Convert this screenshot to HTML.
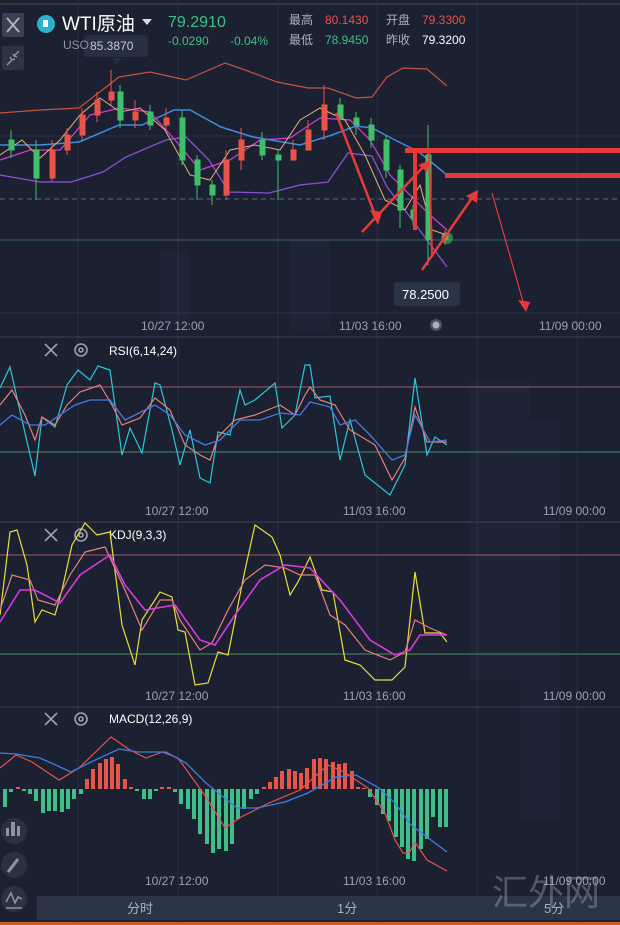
<!DOCTYPE html>
<html><head><meta charset="utf-8"><style>
html,body{margin:0;padding:0;background:#1b2131;width:620px;height:925px;overflow:hidden}
svg{display:block}
text{font-family:"Liberation Sans","Noto Sans CJK SC",sans-serif}
</style></head><body>
<svg width="620" height="925" viewBox="0 0 620 925" xmlns="http://www.w3.org/2000/svg">
<rect width="620" height="925" fill="#1b2131"/>
<line x1="0" y1="4" x2="620" y2="4" stroke="#5a4a3a" stroke-width="1"/>
<g fill="#20273a" opacity="0.6">
<rect x="290" y="240" width="40" height="90"/><rect x="470" y="380" width="60" height="300"/><rect x="520" y="420" width="40" height="400"/><rect x="160" y="250" width="30" height="80"/>
</g>
<g stroke="#282f41" stroke-width="1">
<line x1="78" y1="0" x2="78" y2="925"/><line x1="178" y1="0" x2="178" y2="925"/><line x1="278" y1="0" x2="278" y2="925"/><line x1="377" y1="0" x2="377" y2="925"/><line x1="477" y1="0" x2="477" y2="925"/><line x1="577" y1="0" x2="577" y2="925"/>
<line x1="0" y1="136" x2="620" y2="136"/>
</g>
<line x1="0" y1="199" x2="620" y2="199" stroke="#5a6275" stroke-dasharray="5,4"/>
<line x1="0" y1="240" x2="620" y2="240" stroke="#3d5f62"/>
<line x1="0" y1="313" x2="620" y2="313" stroke="#2e3547"/>
<line x1="0" y1="337" x2="620" y2="337" stroke="#3a4153"/>
<line x1="0" y1="522" x2="620" y2="522" stroke="#3a4153"/>
<line x1="0" y1="707" x2="620" y2="707" stroke="#3a4153"/>

<polyline fill="none" stroke="#c8503f" stroke-width="1.2" points="0,113 40,110 79,108 119,77 150,72 186,80 209,70 225,63 245,70 277,82 308,88 328,88 356,98 372,97 387,77 403,68 427,69 447,86"/>
<polyline fill="none" stroke="#3d8ee0" stroke-width="1.5" points="0,145 40,145 79,142 119,125 142,125 174,110 190,110 221,127 253,137 300,145 332,135 356,126 372,128 395,140 419,152 447,175"/>
<polyline fill="none" stroke="#8c4fd8" stroke-width="1.3" points="0,175 40,182 71,182 103,172 126,157 166,140 186,137 209,160 229,192 269,193 300,185 328,182 348,153 372,156 387,187 407,213 427,240 447,267"/>
<polyline fill="none" stroke="#d33fd0" stroke-width="1.2" points="0,160 30,150 60,150 90,115 120,108 150,112 175,140 200,170 230,160 260,140 290,138 320,118 350,120 370,140 390,175 410,195 430,215 447,230"/>
<polyline fill="none" stroke="#e8b07a" stroke-width="1" points="0,155 22,140 40,158 60,140 80,115 100,98 120,112 140,108 165,130 190,175 210,180 230,150 255,145 280,150 300,120 320,108 345,120 365,155 385,200 405,210 420,185 432,230 447,235"/>

<g stroke-width="1">
<g fill="#3fbf6a" stroke="#3fbf6a">
<line x1="11" y1="130" x2="11" y2="158"/><rect x="9" y="140" width="5" height="10"/>
<line x1="36" y1="140" x2="36" y2="200"/><rect x="34" y="150" width="5" height="28"/>
<line x1="120" y1="85" x2="120" y2="128"/><rect x="118" y="92" width="5" height="28"/>
<line x1="150" y1="105" x2="150" y2="130"/><rect x="148" y="112" width="5" height="13"/>
<line x1="182" y1="110" x2="182" y2="165"/><rect x="180" y="118" width="5" height="42"/>
<line x1="197" y1="155" x2="197" y2="200"/><rect x="195" y="160" width="5" height="25"/>
<line x1="212" y1="180" x2="212" y2="205"/><rect x="210" y="185" width="5" height="10"/>
<line x1="262" y1="132" x2="262" y2="160"/><rect x="260" y="140" width="5" height="15"/>
<line x1="278" y1="150" x2="278" y2="200"/><rect x="276" y="155" width="5" height="5"/>
<line x1="340" y1="98" x2="340" y2="125"/><rect x="338" y="105" width="5" height="13"/>
<line x1="356" y1="112" x2="356" y2="135"/><rect x="354" y="118" width="5" height="7"/>
<line x1="371" y1="118" x2="371" y2="148"/><rect x="369" y="125" width="5" height="15"/>
<line x1="386" y1="135" x2="386" y2="178"/><rect x="384" y="140" width="5" height="30"/>
<line x1="400" y1="165" x2="400" y2="228"/><rect x="398" y="170" width="5" height="40"/>
<line x1="413" y1="205" x2="413" y2="225"/><rect x="411" y="210" width="5" height="8"/>
<line x1="428" y1="125" x2="428" y2="265"/><rect x="426" y="155" width="5" height="85"/>
</g>
<g fill="#e8534a" stroke="#e8534a">
<line x1="52" y1="140" x2="52" y2="182"/><rect x="50" y="150" width="5" height="28"/>
<line x1="67" y1="128" x2="67" y2="155"/><rect x="65" y="135" width="5" height="15"/>
<line x1="82" y1="108" x2="82" y2="140"/><rect x="80" y="115" width="5" height="20"/>
<line x1="97" y1="92" x2="97" y2="122"/><rect x="95" y="100" width="5" height="15"/>
<line x1="111" y1="70" x2="111" y2="105"/><rect x="109" y="92" width="5" height="8"/>
<line x1="135" y1="100" x2="135" y2="128"/><rect x="133" y="112" width="5" height="8"/>
<line x1="166" y1="108" x2="166" y2="130"/><rect x="164" y="118" width="5" height="7"/>
<line x1="226" y1="150" x2="226" y2="200"/><rect x="224" y="160" width="5" height="35"/>
<line x1="241" y1="128" x2="241" y2="170"/><rect x="239" y="140" width="5" height="20"/>
<line x1="293" y1="140" x2="293" y2="160"/><rect x="291" y="150" width="5" height="10"/>
<line x1="308" y1="120" x2="308" y2="145"/><rect x="306" y="130" width="5" height="20"/>
<line x1="324" y1="85" x2="324" y2="140"/><rect x="322" y="105" width="5" height="25"/>
<line x1="445" y1="230" x2="445" y2="245"/><rect x="443" y="235" width="5" height="5"/>
</g>
</g>
<circle cx="447" cy="238" r="6" fill="#3fd96a" opacity="0.5"/>

<g stroke="#e83a3a" fill="#e83a3a">
<rect x="405" y="148" width="215" height="5" stroke="none"/>
<rect x="445" y="173" width="175" height="5" stroke="none"/>
<rect x="413" y="150" width="4" height="80" stroke="none"/>
<line x1="336" y1="113" x2="377" y2="220" stroke-width="2.5"/><polygon points="370,210 382,212 378,225" stroke="none"/>
<line x1="362" y1="232" x2="425" y2="165" stroke-width="2.5"/><polygon points="418,165 430,160 427,172" stroke="none"/>
<line x1="429" y1="150" x2="432" y2="255" stroke-width="2"/>
<line x1="422" y1="270" x2="474" y2="195" stroke-width="2.5"/><polygon points="466,196 478,190 477,203" stroke="none"/>
<line x1="492" y1="193" x2="524" y2="305" stroke-width="1.2"/><polygon points="518,300 530,302 526,312" stroke="none"/>
</g>

<rect x="2" y="13" width="22" height="24" rx="2" fill="#3a4152"/>
<path d="M7 18 L19 32 M19 18 L7 32" stroke="#b0b6c2" stroke-width="1.8"/>
<rect x="2" y="46" width="22" height="24" rx="2" fill="#2c3343"/>
<path d="M7 65 L12 60 M19 51 L14 56 M10 57 L12 60 L15 59 M13 54 L14 56 L17 57" stroke="#8c93a2" stroke-width="1.5" fill="none"/>
<circle cx="46" cy="24" r="9" fill="#29b3c8"/>
<rect x="43" y="20" width="5" height="7" fill="#fff"/>
<text x="62" y="30" font-size="19" fill="#fff">WTI原油</text>
<path d="M142 19 L152 19 L147 25 Z" fill="#ddd"/>
<text x="168" y="27" font-size="16" fill="#3fbf87">79.2910</text>
<text x="168" y="45" font-size="12" fill="#3fbf87">-0.0290</text>
<text x="230" y="45" font-size="12" fill="#3fbf87">-0.04%</text>
<text x="289" y="24" font-size="12" fill="#aab0bd">最高</text>
<text x="325" y="24" font-size="12" fill="#e8534a">80.1430</text>
<text x="386" y="24" font-size="12" fill="#aab0bd">开盘</text>
<text x="422" y="24" font-size="12" fill="#e8534a">79.3300</text>
<text x="289" y="44" font-size="12" fill="#aab0bd">最低</text>
<text x="325" y="44" font-size="12" fill="#3fbf87">78.9450</text>
<text x="386" y="44" font-size="12" fill="#aab0bd">昨收</text>
<text x="422" y="44" font-size="12" fill="#fff">79.3200</text>
<rect x="84" y="35" width="64" height="22" rx="3" fill="#263042"/>
<text x="63" y="49" font-size="12" fill="#8a92a3">USO</text>
<text x="90" y="50" font-size="12" fill="#c8ccd5">85.3870</text>
<path d="M112 58 L117 64 L122 58Z" fill="#263042"/>
<rect x="394" y="282" width="66" height="24" rx="3" fill="#2a3447"/>
<text x="402" y="299" font-size="13" fill="#fff">78.2500</text>
<circle cx="436" cy="325" r="6" fill="#4a5162"/><circle cx="436" cy="325" r="3.5" fill="#aab0bd"/>
<g font-size="12" fill="#9aa1b0">
<text x="141" y="330">10/27 12:00</text><text x="339" y="330">11/03 16:00</text><text x="539" y="330">11/09 00:00</text>
<text x="145" y="515">10/27 12:00</text><text x="343" y="515">11/03 16:00</text><text x="543" y="515">11/09 00:00</text>
<text x="145" y="700">10/27 12:00</text><text x="343" y="700">11/03 16:00</text><text x="543" y="700">11/09 00:00</text>
<text x="145" y="885">10/27 12:00</text><text x="343" y="885">11/03 16:00</text><text x="543" y="885">11/09 00:00</text>
</g>

<g stroke="#9aa1b0" stroke-width="1.6" fill="none">
<path d="M45 344 L57 356 M57 344 L45 356"/><circle cx="81" cy="350" r="6"/><circle cx="81" cy="350" r="2"/>
<path d="M45 529 L57 541 M57 529 L45 541"/><circle cx="81" cy="535" r="6"/><circle cx="81" cy="535" r="2"/>
<path d="M45 713 L57 725 M57 713 L45 725"/><circle cx="81" cy="719" r="6"/><circle cx="81" cy="719" r="2"/>
</g>
<text x="109" y="355" font-size="12" fill="#fff">RSI(6,14,24)</text>
<text x="109" y="539" font-size="12" fill="#fff">KDJ(9,3,3)</text>
<text x="109" y="723" font-size="12" fill="#fff">MACD(12,26,9)</text>

<line x1="0" y1="387" x2="620" y2="387" stroke="#a05a6a"/>
<line x1="0" y1="452" x2="620" y2="452" stroke="#4f8a66"/>
<polyline fill="none" stroke="#2fc6d8" stroke-width="1.2" points="0,388 10,367 22,420 35,476 42,417 55,427 67,385 78,370 90,380 98,366 110,370 122,455 130,428 142,453 155,383 160,385 172,430 180,465 190,430 200,478 210,483 218,432 230,435 240,390 245,405 255,400 275,383 282,428 295,415 305,365 310,365 315,398 330,396 340,460 350,420 365,475 390,495 405,465 415,378 427,455 435,437 447,445"/>
<polyline fill="none" stroke="#e8807a" stroke-width="1.2" points="0,405 12,390 25,415 35,440 42,417 55,425 67,405 80,392 100,385 112,405 122,425 140,418 155,398 170,410 185,445 200,455 210,460 218,437 235,420 255,415 280,405 295,415 305,395 310,387 320,400 335,405 350,430 375,445 392,480 405,458 415,407 427,442 447,442"/>
<polyline fill="none" stroke="#4a78e0" stroke-width="1.3" points="0,425 12,415 30,425 45,425 60,415 75,405 90,400 110,400 125,420 155,405 170,415 185,435 205,445 220,440 240,420 260,420 280,413 300,415 310,402 330,407 340,425 355,420 370,435 392,460 405,455 415,415 430,442 447,440"/>

<line x1="0" y1="555" x2="620" y2="555" stroke="#a05a6a"/>
<line x1="0" y1="654" x2="620" y2="654" stroke="#4f8a66"/>
<polyline fill="none" stroke="#e8e03a" stroke-width="1.2" points="0,615 10,532 17,530 27,565 35,622 42,610 55,615 62,590 72,545 85,523 97,535 110,532 122,625 135,665 142,620 160,592 172,597 178,630 185,632 195,685 208,683 218,652 228,655 245,570 255,525 272,537 280,555 290,595 298,582 310,557 322,590 333,592 345,660 360,665 375,680 392,680 405,667 415,572 425,633 440,633 447,642"/>
<polyline fill="none" stroke="#e8807a" stroke-width="1.2" points="0,610 12,575 30,580 38,600 55,605 70,575 85,552 105,547 125,590 142,630 160,600 172,600 180,620 200,650 212,643 228,610 245,580 265,565 285,568 300,575 315,575 330,615 345,625 365,650 390,660 405,652 415,620 430,628 447,635"/>
<polyline fill="none" stroke="#d83ae0" stroke-width="1.6" points="0,622 20,590 35,590 60,603 80,575 110,555 125,585 145,610 175,605 200,640 215,645 235,615 260,580 285,565 310,568 340,600 370,640 395,655 410,650 420,635 447,635"/>

<g fill="#3fbf87">
<rect x="3" y="789" width="4" height="18"/><rect x="9" y="789" width="4" height="3"/><rect x="22" y="789" width="4" height="2"/><rect x="28" y="789" width="4" height="5"/><rect x="34" y="789" width="4" height="12"/><rect x="41" y="789" width="4" height="24"/><rect x="47" y="789" width="4" height="22"/><rect x="53" y="789" width="4" height="22"/><rect x="60" y="789" width="4" height="23"/><rect x="66" y="789" width="4" height="20"/><rect x="72" y="789" width="4" height="10"/><rect x="79" y="789" width="4" height="5"/>
<rect x="135" y="789" width="4" height="2"/><rect x="142" y="789" width="4" height="10"/><rect x="148" y="789" width="4" height="10"/><rect x="154" y="789" width="4" height="2"/><rect x="173" y="789" width="4" height="3"/><rect x="179" y="789" width="4" height="15"/><rect x="186" y="789" width="4" height="20"/><rect x="192" y="789" width="4" height="30"/><rect x="198" y="789" width="4" height="45"/><rect x="205" y="789" width="4" height="55"/><rect x="211" y="789" width="4" height="64"/><rect x="217" y="789" width="4" height="60"/><rect x="224" y="789" width="4" height="62"/><rect x="230" y="789" width="4" height="55"/><rect x="236" y="789" width="4" height="30"/><rect x="242" y="789" width="4" height="20"/><rect x="249" y="789" width="4" height="10"/><rect x="255" y="789" width="4" height="5"/>
<rect x="368" y="789" width="4" height="8"/><rect x="375" y="789" width="4" height="16"/><rect x="381" y="789" width="4" height="25"/><rect x="387" y="789" width="4" height="32"/><rect x="394" y="789" width="4" height="48"/><rect x="400" y="789" width="4" height="58"/><rect x="406" y="789" width="4" height="70"/><rect x="412" y="789" width="4" height="72"/><rect x="419" y="789" width="4" height="60"/><rect x="425" y="789" width="4" height="50"/><rect x="431" y="789" width="4" height="28"/><rect x="438" y="789" width="4" height="38"/><rect x="444" y="789" width="4" height="38"/>
</g>
<g fill="#e8534a">
<rect x="16" y="787" width="4" height="2"/><rect x="85" y="779" width="4" height="10"/><rect x="91" y="769" width="4" height="20"/><rect x="98" y="763" width="4" height="26"/><rect x="104" y="759" width="4" height="30"/><rect x="110" y="757" width="4" height="32"/><rect x="116" y="764" width="4" height="25"/><rect x="123" y="779" width="4" height="10"/><rect x="129" y="787" width="4" height="2"/><rect x="160" y="787" width="4" height="2"/><rect x="167" y="787" width="4" height="2"/>
<rect x="262" y="787" width="4" height="2"/><rect x="268" y="782" width="4" height="7"/><rect x="274" y="777" width="4" height="12"/><rect x="280" y="771" width="4" height="18"/><rect x="287" y="769" width="4" height="20"/><rect x="293" y="771" width="4" height="18"/><rect x="299" y="773" width="4" height="16"/><rect x="305" y="768" width="4" height="21"/><rect x="312" y="759" width="4" height="30"/><rect x="318" y="758" width="4" height="31"/><rect x="324" y="759" width="4" height="30"/><rect x="331" y="762" width="4" height="27"/><rect x="337" y="764" width="4" height="25"/><rect x="343" y="763" width="4" height="26"/><rect x="350" y="771" width="4" height="18"/><rect x="356" y="787" width="4" height="2"/><rect x="362" y="788" width="4" height="1"/>
</g>
<polyline fill="none" stroke="#e8534a" stroke-width="1.2" points="0,768 16,755 32,762 59,780 79,768 111,737 130,750 146,758 162,752 178,758 206,797 225,828 241,817 269,803 300,790 328,765 344,772 368,788 385,813 395,840 403,853 409,853 415,842 427,860 447,871"/>
<polyline fill="none" stroke="#3d7ee0" stroke-width="1.3" points="0,753 16,754 40,758 71,772 91,762 119,749 138,752 166,752 186,763 206,783 237,808 257,808 285,802 308,793 336,777 356,775 379,788 395,803 411,825 447,852"/>

<circle cx="14" cy="831" r="13" fill="#2a3142"/>
<g fill="#8c93a2"><rect x="6" y="828" width="3" height="8"/><rect x="11" y="822" width="4" height="14"/><rect x="17" y="826" width="3" height="10"/></g>
<circle cx="14" cy="865" r="13" fill="#2a3142"/>
<path d="M8 872 L18 859" stroke="#8c93a2" stroke-width="3"/>
<circle cx="14" cy="899" r="13" fill="#2a3142"/>
<path d="M6 902 L11 893 L15 903 L18 897 L22 899 M6 908 L22 908" stroke="#8c93a2" stroke-width="1.6" fill="none"/>

<rect x="37" y="896" width="583" height="24" fill="#2c3548"/>
<text x="127" y="913" font-size="13" fill="#aab0bd">分时</text>
<text x="337" y="913" font-size="13" fill="#aab0bd">1分</text>
<text x="544" y="913" font-size="13" fill="#aab0bd">5分</text>
<text x="492" y="905" font-size="36" fill="#c9ccd4" opacity="0.3" font-family="'Noto Serif CJK SC',serif">汇外网</text>
<rect x="0" y="922" width="620" height="3" fill="#c0602a"/>
</svg>
</body></html>
